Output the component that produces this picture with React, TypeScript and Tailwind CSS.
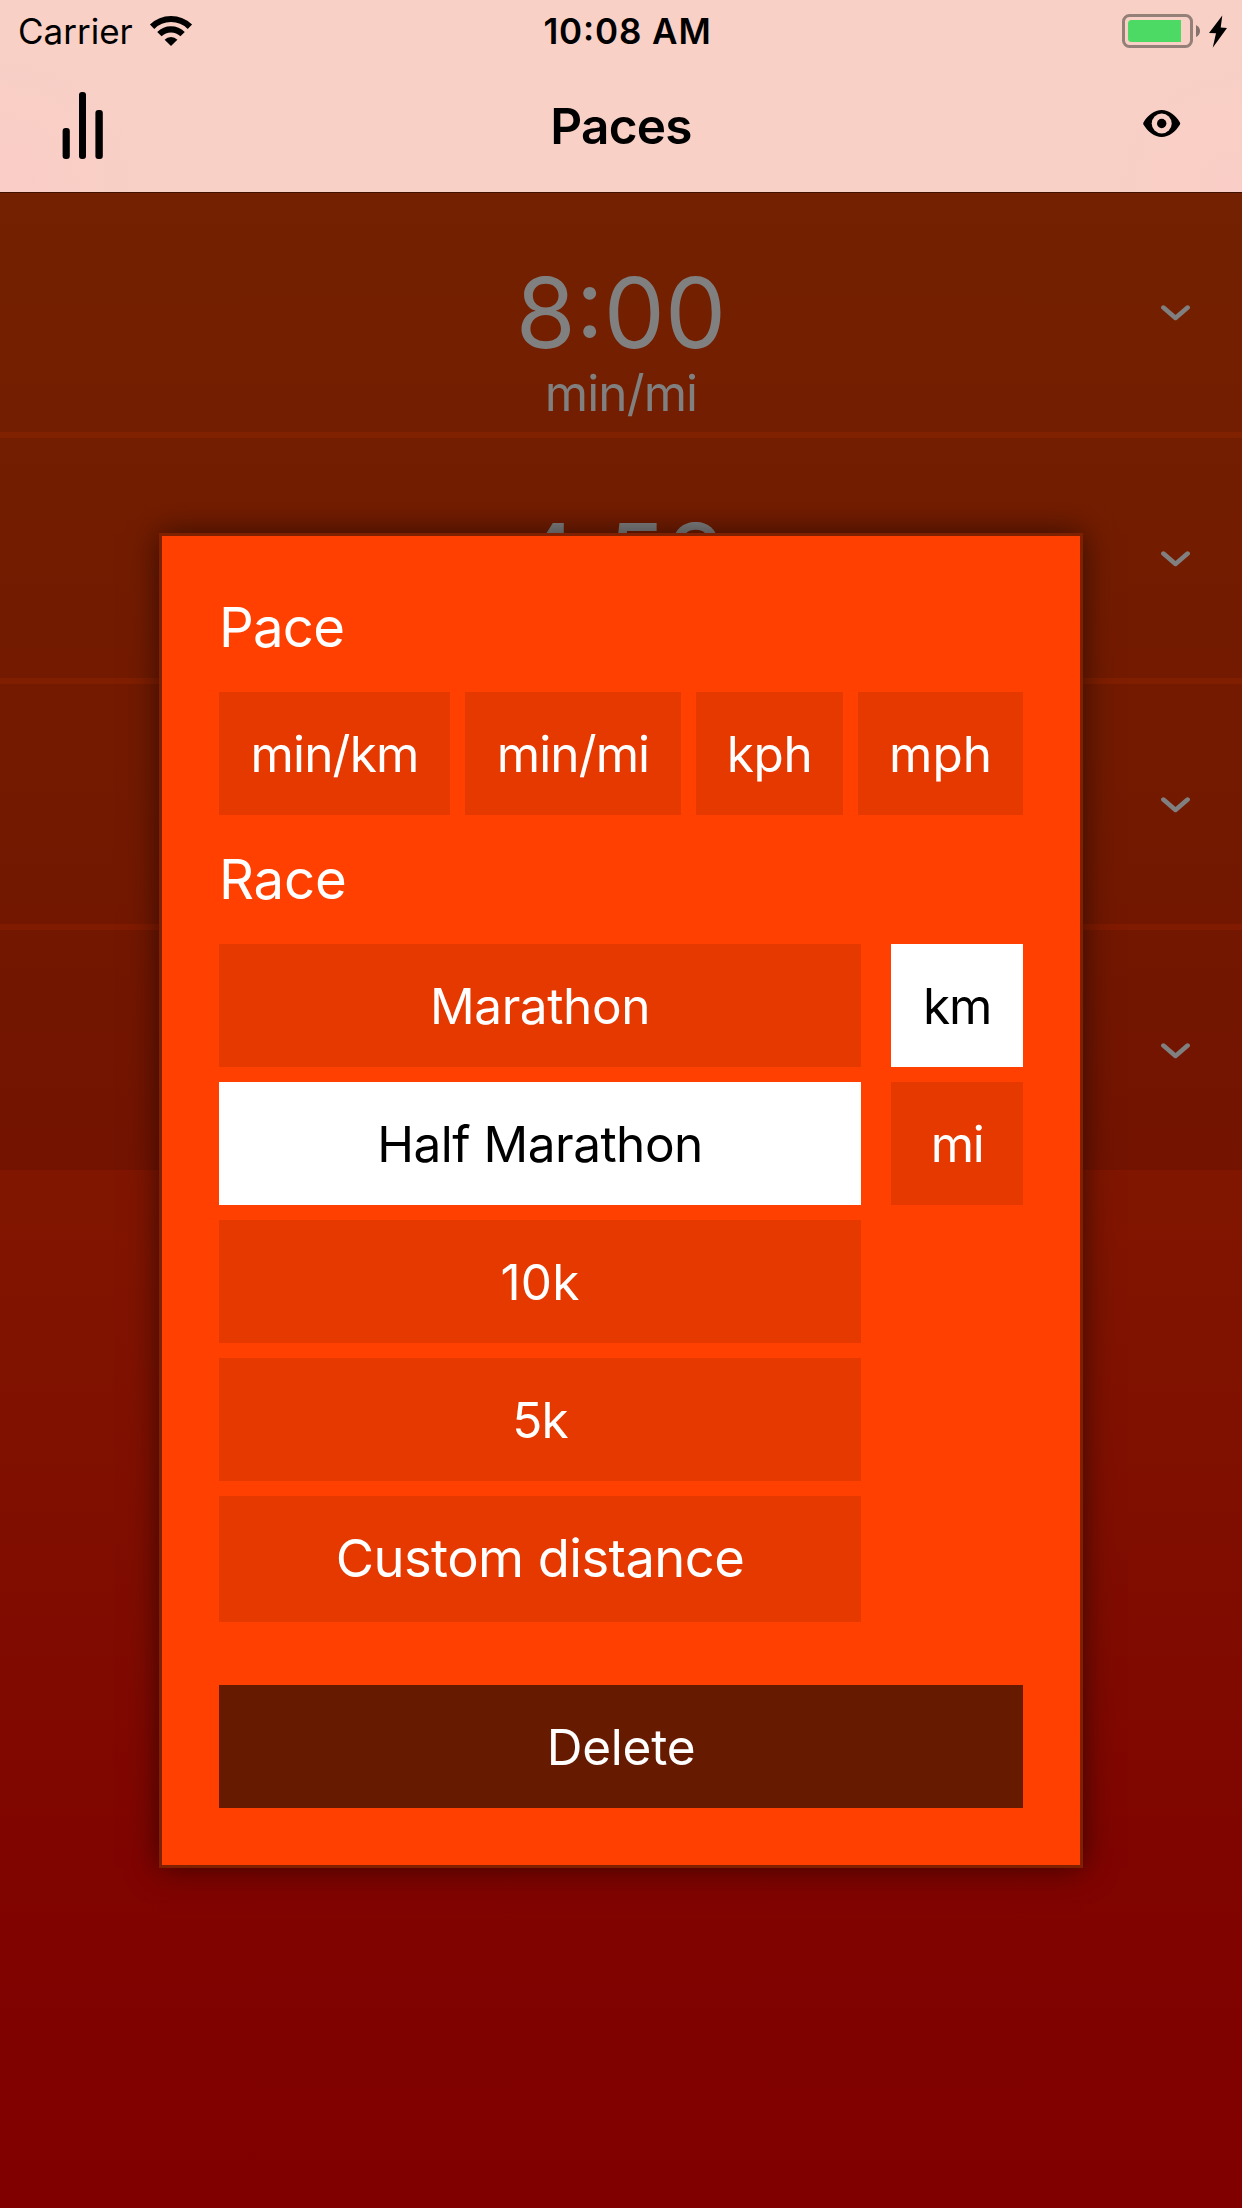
import React from "react";
import clsx from "clsx";

function WifiIcon() {
  return (
    <svg className="ml-[16px] h-[32px] w-[44px]" viewBox="149 14 44 32" fill="none" stroke="#000">
      <path d="M152.1 25.7A27 27 0 0 1 189.9 25.7" strokeWidth="6.2" />
      <path d="M159.4 33.1A16.6 16.6 0 0 1 182.6 33.1" strokeWidth="6.2" />
      <path d="M171 45L164.6 38.7A9 9 0 0 1 177.4 38.7Z" fill="#000" stroke="none" />
    </svg>
  );
}

function BatteryIcon() {
  return (
    <svg className="-mt-px h-[36px] w-[108px]" viewBox="1121 12 108 36">
      <rect x="1123.5" y="14.5" width="68" height="31" rx="6" fill="none" stroke="#958079" strokeWidth="3" />
      <path d="M1181 19H1131.5Q1128 19 1128 22.5V37.5Q1128 41 1131.5 41H1181Z" fill="#4cd964" />
      <path d="M1196 24Q1200 26 1200 30T1196 36Z" fill="#86726c" />
      <path d="M1222.3 14.5L1209 32L1216 32.3L1212.7 46.7L1227 27L1220.7 26.4Z" fill="#000" />
    </svg>
  );
}

function BarsIcon() {
  return (
    <svg className="h-[68px] w-[42px]" viewBox="0 0 42 68">
      <rect x="0.6" y="36" width="7.2" height="31" rx="3" />
      <rect x="17" y="0" width="7" height="67" rx="3" />
      <rect x="33.4" y="18" width="7.4" height="49" rx="3" />
    </svg>
  );
}

function EyeIcon() {
  return (
    <svg className="h-[27px] w-[38px]" viewBox="0 0 38 27">
      <path d="M0.6 12.2C5 5 11.5 0 18.7 0S32.4 5 36.8 12.2Q37.6 13.5 36.8 14.8C32.4 22 25.9 27 18.7 27S5 22 0.6 14.8Q-0.2 13.5 0.6 12.2Z" />
      <circle cx="18.7" cy="13.5" r="10" fill="#f8d0c6" />
      <circle cx="18.7" cy="13.5" r="4.7" />
    </svg>
  );
}

function Chevron() {
  return (
    <svg className="absolute top-[112.5px] right-[51px] h-[16px] w-[31px]" viewBox="0 0 31 16" fill="none" stroke="#808080" strokeWidth="4.6" strokeLinecap="round" strokeLinejoin="round">
      <path d="M3.4 2.6L15.5 12.9L27.6 2.6" />
    </svg>
  );
}

function PaceRow({ value, unit, lowColon }: { value?: string; unit?: string; lowColon?: boolean }) {
  return (
    <li className="relative h-[240px] bg-black/10 pt-[62px] text-center text-[#808080]">
      <div className={clsx("h-[116px] text-[97px] leading-[117px]", lowColon && "[font-feature-settings:'calt'_0]")}>
        {value}
      </div>
      <div className="h-[46px] text-[49.5px] leading-[46px] tracking-[-0.9px]">{unit}</div>
      <Chevron />
    </li>
  );
}

function Option({ label, className, selected }: { label: string; className: string; selected?: boolean }) {
  return (
    <button
      className={clsx(
        "flex h-[123px] shrink-0 items-center justify-center pt-[2px] text-[49.5px] leading-none whitespace-nowrap",
        selected ? "bg-white text-black" : "bg-[#e63900] text-white",
        className,
      )}
    >
      {label}
    </button>
  );
}

export default function App() {
  return (
    <div className="flex h-[2208px] w-[1242px] flex-col overflow-hidden font-['Inter',sans-serif]">
      <header className="h-[192px] bg-[#f8d0c6] bg-[radial-gradient(circle_at_0%_100%,#facdc6_0px,#f8d0c600_150px),radial-gradient(circle_at_100%_100%,#facec6_0px,#f8d0c600_150px)] text-black">
        <div className="grid h-[60px] grid-cols-[400px_1fr_400px] items-center pt-[2px]">
          <div className="flex items-center pl-[18px] text-[35px] leading-none">
            Carrier
            <WifiIcon />
          </div>
          <div className="pl-[13px] text-center text-[35px] leading-none font-semibold tracking-[0.88px] [font-feature-settings:'calt'_1]">
            10:08 AM
          </div>
          <div className="flex justify-end pr-[13px]">
            <BatteryIcon />
          </div>
        </div>
        <div className="grid h-[132px] grid-cols-[300px_1fr_300px] items-center">
          <div className="pl-[62px]">
            <BarsIcon />
          </div>
          <h1 className="pt-[2px] text-center text-[49.5px] leading-none font-semibold tracking-[-0.76px]">Paces</h1>
          <div className="flex justify-end pr-[61px] pb-[5px]">
            <EyeIcon />
          </div>
        </div>
      </header>

      <main className="relative flex-1 bg-linear-to-b from-[#802500] from-0% via-[#800400] via-83% to-[#800000] to-100%">
        <ul className="flex flex-col gap-[6px]">
          <PaceRow value="8:00" unit="min/mi" />
          <PaceRow value="4:58" unit="min/km" lowColon />
          <PaceRow />
          <PaceRow />
        </ul>
        <div className="absolute inset-x-0 top-0 h-px bg-[#401000]" />

        <div className="absolute inset-0 flex items-center justify-center pt-px">
          <section className="flex w-[924px] flex-col border-[3px] border-[#7f2000] bg-[#ff4000] p-[57px] text-white shadow-[0_0_30px_rgba(0,0,0,0.55)]">
            <h2 className="mb-[30px] text-[54.5px] leading-[69px] tracking-[-0.8px]">Pace</h2>
            <div className="flex gap-[15px]">
              <Option label="min/km" className="w-[231px] tracking-[-0.8px]" />
              <Option label="min/mi" className="w-[216px] tracking-[-0.9px]" />
              <Option label="kph" className="w-[147px] tracking-[-0.4px]" />
              <Option label="mph" className="w-[165px]" />
            </div>
            <h2 className="my-[30px] text-[54.5px] leading-[69px] tracking-[-0.2px]">Race</h2>
            <div className="flex gap-[30px]">
              <div className="flex flex-col gap-[15px]">
                <Option label="Marathon" className="w-[642px] tracking-[-0.4px]" />
                <Option label="Half Marathon" className="w-[642px] tracking-[-0.5px]" selected />
                <Option label="10k" className="w-[642px] tracking-[0.2px]" />
                <Option label="5k" className="w-[642px] tracking-[-0.8px]" />
                <button className="flex h-[126px] w-[642px] items-center justify-center bg-[#e63900] pb-px text-[52.5px] leading-none tracking-[-0.57px] text-white">
                  Custom distance
                </button>
              </div>
              <div className="flex flex-col gap-[15px]">
                <Option label="km" className="w-[132px] tracking-[-1.2px]" selected />
                <Option label="mi" className="w-[132px] tracking-[-1.5px]" />
              </div>
            </div>
            <button className="mt-[63px] flex h-[123px] items-center justify-center bg-[#661a00] pt-[2px] text-[49.5px] leading-none tracking-[-0.23px] text-white">
              Delete
            </button>
          </section>
        </div>
      </main>
    </div>
  );
}
